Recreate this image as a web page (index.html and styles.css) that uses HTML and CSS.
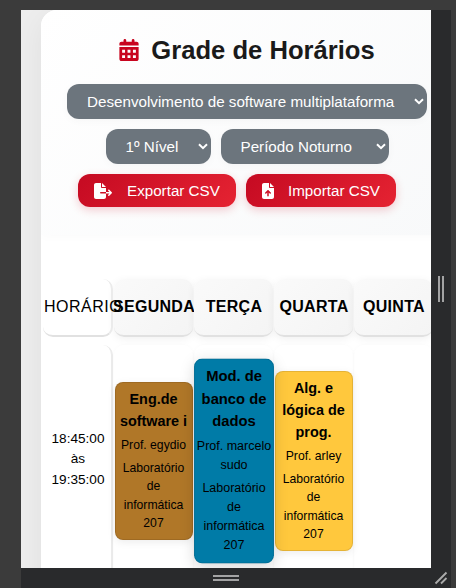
FILE: index.html
```html
<!DOCTYPE html>
<html lang="pt-BR">
<head>
<meta charset="utf-8">
<title>Grade de Horários</title>
<link rel="stylesheet" href="styles.css">
</head>
<body>
<div class="frame">
  <div class="viewport">
    <main class="card">
      <header class="top">
        <h1 class="title">
          <svg class="cal" viewBox="0 0 448 512"><path fill="#c8051f" d="M128 0c17.700 0 32 14.300 32 32v32h128V32c0-17.700 14.300-32 32-32s32 14.300 32 32v32h48c26.500 0 48 21.500 48 48v40H0v-40c0-26.500 21.500-48 48-48h48V32c0-17.700 14.300-32 32-32zM0 184h448v280c0 26.500-21.500 48-48 48H48c-26.500 0-48-21.500-48-48V184zm64 66v68h68v-68H64zm126 0v68h68v-68h-68zm126 0v68h68v-68h-68zM64 376v68h68v-68H64zm126 0v68h68v-68h-68zm126 0v68h68v-68h-68z"/></svg>
          <span>Grade de Horários</span>
        </h1>
        <div class="row selects">
          <div class="select course"><span>Desenvolvimento de software multiplataforma</span><svg class="chev" viewBox="0 0 10 7"><path d="M1 1.200l4 4 4-4"/></svg></div>
          <div class="select level"><span>1º Nível</span><svg class="chev" viewBox="0 0 10 7"><path d="M1 1.200l4 4 4-4"/></svg></div>
          <div class="select period"><span>Período Noturno</span><svg class="chev" viewBox="0 0 10 7"><path d="M1 1.200l4 4 4-4"/></svg></div>
        </div>
        <div class="row actions">
          <div class="btn export"><svg class="exp" viewBox="0 0 576 512"><path fill="#fff" d="M0 64C0 28.700 28.700 0 64 0h160v128c0 17.700 14.300 32 32 32h128v128H216c-13.300 0-24 10.700-24 24s10.700 24 24 24h168v112c0 35.300-28.700 64-64 64H64c-35.300 0-64-28.700-64-64V64zm384 272v-48h110l-39-39c-22-22 12-56 34-34l80 80c9 9 9 25 0 34l-80 80c-22 22-56-12-34-34l39-39H384zm0-208H256V0l128 128z"/></svg><span>Exportar CSV</span></div>
          <div class="btn import"><svg class="imp" viewBox="0 0 384 512"><path fill="#fff" fill-rule="evenodd" d="M64 0C28.700 0 0 28.700 0 64v384c0 35.300 28.700 64 64 64h256c35.300 0 64-28.700 64-64V160H256c-17.700 0-32-14.300-32-32V0H64zm192 0v128h128L256 0zm-40 408c0 32-48 32-48 0V306l-31 31c-22 22-56-12-34-34l72-72c9-9 25-9 34 0l72 72c22 22-12 56-34 34l-31-31v102z"/></svg><span>Importar CSV</span></div>
        </div>
      </header>
      <section class="grid">
        <div class="head hour">HORÁRIO</div>
        <div class="head day">SEGUNDA</div>
        <div class="head day">TERÇA</div>
        <div class="head day">QUARTA</div>
        <div class="head day">QUINTA</div>
        <div class="time">18:45:00<br>às<br>19:35:00</div>
        <div class="slot"><article class="lesson brown"><h2>Eng.de<br>software i</h2><p>Prof. egydio</p><p>Laboratório<br>de<br>informática<br>207</p></article></div>
        <div class="slot"><article class="lesson blue"><h2>Mod. de<br>banco de<br>dados</h2><p>Prof. marcelo<br>sudo</p><p>Laboratório<br>de<br>informática<br>207</p></article></div>
        <div class="slot"><article class="lesson yellow"><h2>Alg. e<br>lógica de<br>prog.</h2><p>Prof. arley</p><p>Laboratório<br>de<br>informática<br>207</p></article></div>
        <div class="slot"></div>
      </section>
    </main>
  </div>
  <div class="bar-right"><i class="grip vertical"></i></div>
  <div class="bar-bottom"><i class="grip horizontal"></i></div>
  <div class="corner"><svg viewBox="0 0 14 14"><path d="M1.500 12.500l11-11M7 12.500l5.500-5.500"/></svg></div>
</div>
</body>
</html>
```
FILE: styles.css
```css
* { box-sizing: border-box; }
body {
  margin: 0;
  height: 588px;
  overflow: hidden;
  background: #3b3b3b;
  font-family: "Liberation Sans", Arial, sans-serif;
  color: #000;
}
.frame {
  display: grid;
  grid-template-columns: 410px 20px;
  grid-template-rows: 558px 20px;
  width: 430px;
  margin: 10px 0 0 21px;
}
.viewport { overflow: hidden; background: #ededed; padding-left: 20px; }
.card {
  width: 412px;
  height: 640px;
  background: #fff;
  border-radius: 16px;
  box-shadow: 0 8px 30px rgba(0, 0, 0, .06);
  overflow: hidden;
}
.top {
  height: 225px;
  padding-top: 24px;
  background: linear-gradient(135deg, #fff, #f8f9fa);
  box-shadow: 0 2px 10px rgba(0, 0, 0, .02);
}
.title {
  display: flex;
  justify-content: center;
  align-items: center;
  gap: 12px;
  height: 32px;
  margin: 0 0 18px;
  font-size: 25.600px;
  line-height: 32px;
  color: #1a1a1a;
  white-space: nowrap;
}
.cal { width: 20px; height: 22px; }
.row { display: flex; flex-wrap: wrap; justify-content: center; gap: 10px; }
.select {
  display: flex;
  align-items: center;
  justify-content: space-between;
  height: 35px;
  padding: 0 3px 0 20px;
  border-radius: 12px;
  background: #6c757d;
  color: #fff;
  font-size: 15.200px;
  white-space: nowrap;
  box-shadow: 0 2px 8px rgba(0, 0, 0, .03);
}
.course { width: 360px; }
.level { width: 105px; }
.period { width: 168px; }
.chev { width: 10px; height: 7px; fill: none; stroke: #fff; stroke-width: 2; }
.actions { width: 392px; margin-top: 10px; }
.btn {
  display: flex;
  align-items: center;
  height: 33px;
  padding-left: 16px;
  border-radius: 12px;
  background: linear-gradient(135deg, #c50a22, #e52332);
  box-shadow: 0 3px 10px rgba(200, 5, 31, .2);
  color: #fff;
  font-size: 15.200px;
  white-space: nowrap;
}
.export { width: 158px; gap: 15px; }
.import { width: 150px; gap: 14px; }
.exp { width: 18px; height: 16px; }
.imp { width: 12px; height: 16px; }
.grid {
  display: grid;
  grid-template-columns: 70px repeat(4, 79px);
  grid-template-rows: 58px 232px;
  column-gap: 1px;
  row-gap: 8px;
  padding: 44px 0 0 2px;
}
.head {
  display: flex;
  justify-content: center;
  align-items: center;
  border-radius: 10px;
  border-bottom: 2px solid #e1e1e1;
  font-size: 16px;
  letter-spacing: .5px;
  white-space: nowrap;
}
.day {
  padding-left: 1px;
  background: linear-gradient(135deg, #fafafa, #f4f4f4);
  font-weight: bold;
  letter-spacing: .3px;
  box-shadow: 0 2px 8px rgba(0, 0, 0, .06);
}
.hour {
  position: relative;
  z-index: 1;
  justify-content: flex-start;
  padding-left: 1px;
  border-right: 2px solid #ebebeb;
  font-weight: 400;
}
.time {
  display: flex;
  align-items: center;
  justify-content: center;
  padding: 0 0 3px 2px;
  border-right: 2px solid #ebebeb;
  border-top-right-radius: 10px;
  font-size: 13.600px;
  line-height: 20.500px;
  text-align: center;
}
.slot {
  display: flex;
  align-items: center;
  justify-content: center;
  border-radius: 10px;
  box-shadow: 0 0 4px rgba(0, 0, 0, .025);
}
.lesson {
  flex: none;
  width: 78px;
  padding: 5px 0 6px;
  border: 1px solid rgba(0, 0, 0, .1);
  border-radius: 8px;
  box-shadow: 0 2px 8px rgba(0, 0, 0, .08);
  text-align: center;
  white-space: nowrap;
}
.lesson h2 { margin: 0 0 4px; font-size: 14.400px; line-height: 22px; }
.lesson p { margin: 0 0 4px; font-size: 12.200px; line-height: 18.500px; }
.lesson p:last-child { margin: 0; }
.brown { background: #b07728; }
.blue {
  padding: 5px 0 8px;
  background: #007ba7;
  box-shadow: 0 4px 15px rgba(0, 0, 0, .15);
  transform: scale(1.025);
}
.yellow { background: #ffc83d; }
.bar-right, .bar-bottom, .corner {
  display: flex;
  align-items: center;
  justify-content: center;
  background: #292a2c;
}
.grip { display: block; }
.vertical { width: 6px; height: 26px; border: solid #a3a3a4; border-width: 0 2px; }
.horizontal { width: 26px; height: 6px; border: solid #a3a3a4; border-width: 2px 0; }
.corner svg { width: 14px; height: 14px; fill: none; stroke: #aaa; stroke-width: 1.900; }
```
